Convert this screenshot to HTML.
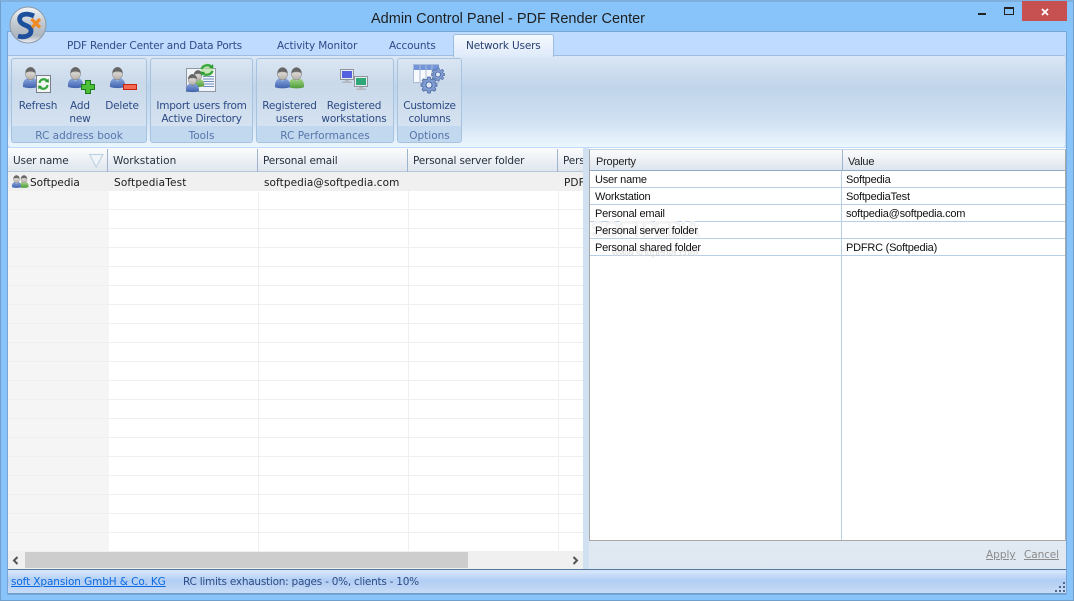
<!DOCTYPE html>
<html><head><meta charset="utf-8">
<style>
html,body{margin:0;padding:0;width:1074px;height:601px;overflow:hidden;background:#88c4fa}
*{box-sizing:border-box}
.a{position:absolute;white-space:nowrap}
.r{font-family:"DejaVu Sans",sans-serif;font-size:10.5px;color:#2c4a85;line-height:13px;text-align:center;letter-spacing:-.15px}
.t{font-family:"DejaVu Sans",sans-serif;font-size:10.5px;color:#2f4a86;line-height:14px;letter-spacing:-.15px}
.gl{font-family:"DejaVu Sans",sans-serif;font-size:10.5px;color:#5575aa;line-height:16px;text-align:center}
.h{font-family:"DejaVu Sans",sans-serif;font-size:10.5px;color:#26303f;line-height:14px;letter-spacing:-.17px}
.c{font-family:"DejaVu Sans",sans-serif;font-size:10.5px;color:#1a1a1a;line-height:14px;letter-spacing:.08px}
.p{font-family:"Liberation Sans",sans-serif;font-size:11px;letter-spacing:-.22px;color:#111;line-height:14px}
.g{position:absolute;top:58px;height:85px;border:1px solid #a6c3df;border-radius:3px;background:linear-gradient(#dbe6f3,#c9d9ea 30%,#d5e2f0 82%);overflow:hidden}
.g i{position:absolute;left:0;right:0;bottom:0;height:16px;background:#c2d8ee;display:block}
svg{position:absolute;overflow:visible}
</style></head><body>
<div class="a" style="left:0;top:0;width:1074px;height:601px;border:1px solid #6f9fca;border-top:2px solid #7fb0dd"></div>

<!-- title bar -->
<div class="a" style="left:371px;top:10px;font:14.5px/18px 'Liberation Sans',sans-serif;color:#1f1f1f">Admin Control Panel - PDF Render Center</div>
<div class="a" style="left:978px;top:13px;width:8px;height:2px;background:#222"></div>
<div class="a" style="left:1004px;top:7px;width:10px;height:8px;border:1px solid #222;border-top-width:2px"></div>
<div class="a" style="left:1022px;top:1px;width:45px;height:20px;background:#c75050"></div>
<svg style="left:1041px;top:8px" width="8" height="8"><path d="M1 1L7 7M7 1L1 7" stroke="#fff" stroke-width="1.8"/></svg>

<!-- inner window -->
<div class="a" style="left:7px;top:31px;width:1060px;height:564px;background:#bfdbff;border:1px solid #78a6d6"></div>

<!-- logo -->
<svg style="left:9px;top:6px" width="38" height="38" viewBox="0 0 38 38">
<defs><linearGradient id="lg" x1="0" y1="0" x2="0" y2="1"><stop offset="0" stop-color="#f4f6f8"/><stop offset=".45" stop-color="#c2c9d0"/><stop offset=".8" stop-color="#aeb6bf"/><stop offset="1" stop-color="#f2f4f6"/></linearGradient></defs>
<circle cx="19" cy="19" r="18" fill="url(#lg)" stroke="#8e99a6"/>
<path d="M25 10C16 6 9 9 11 15C13 20 22 19 22 25C22 30 15 32 9 30" fill="none" stroke="#1c4f9c" stroke-width="4.800"/>
<path d="M22.500 13L31 21.500M31 13L23 21.500" stroke="#f08a24" stroke-width="3.200"/>
</svg>

<!-- tabs -->
<div class="a t" style="left:67px;top:39px;letter-spacing:-.19px">PDF Render Center and Data Ports</div>
<div class="a t" style="left:277px;top:39px">Activity Monitor</div>
<div class="a t" style="left:389px;top:39px">Accounts</div>
<div class="a" style="left:453px;top:34px;width:101px;height:23px;background:linear-gradient(#f5f9fe,#dfeafa);border:1px solid #9dbde0;border-bottom:none;border-radius:3px 3px 0 0;z-index:2"></div>
<div class="a t" style="left:466px;top:39px;z-index:3;color:#27406f">Network Users</div>

<!-- ribbon -->
<div class="a" style="left:8px;top:55px;width:1058px;height:92px;background:linear-gradient(#dbe7f5,#c0d4ea 35%,#cfe0f2 70%,#ecf6fd);border-top:1px solid #9dbde0;border-right:1px solid #c6dbf0;border-radius:0 3px 3px 3px"></div>

<div class="g" style="left:11px;width:136px"><i></i></div>
<div class="g" style="left:150px;width:103px"><i></i></div>
<div class="g" style="left:256px;width:138px"><i></i></div>
<div class="g" style="left:397px;width:65px"><i></i></div>

<!-- person symbol -->
<svg width="0" height="0" style="left:0;top:0"><defs>
<linearGradient id="hd" x1="0" y1="0" x2="0" y2="1"><stop offset="0" stop-color="#9a9a9a"/><stop offset=".5" stop-color="#d6d2ce"/><stop offset="1" stop-color="#b5aea8"/></linearGradient>
<linearGradient id="bb" x1="0" y1="0" x2="0" y2="1"><stop offset="0" stop-color="#8aa8e0"/><stop offset="1" stop-color="#3f62ad"/></linearGradient>
<linearGradient id="bg2" x1="0" y1="0" x2="0" y2="1"><stop offset="0" stop-color="#a6d88a"/><stop offset="1" stop-color="#4d9a3a"/></linearGradient>
<symbol id="pb" viewBox="0 0 15 21" overflow="visible">
<path d="M0 20C-.5 14 2 12 5 11L7.500 14L10 11C13 12 15.500 14 15 20C10 21.500 5 21.500 0 20Z" fill="url(#bb)"/>
<ellipse cx="7.500" cy="6.500" rx="5" ry="6.300" fill="url(#hd)" stroke="#777" stroke-width=".5"/>
<path d="M2.500 6.500C1.500 -1.500 13.500 -1.500 12.500 6.500C11 3.800 4 3.800 2.500 6.500Z" fill="#666"/>
</symbol>
<symbol id="pg" viewBox="0 0 15 21" overflow="visible">
<path d="M0 20C-.5 14 2 12 5 11L7.500 14L10 11C13 12 15.500 14 15 20C10 21.500 5 21.500 0 20Z" fill="url(#bg2)"/>
<ellipse cx="7.500" cy="6.500" rx="5" ry="6.300" fill="url(#hd)" stroke="#777" stroke-width=".5"/>
<path d="M2.500 6.500C1.500 -1.500 13.500 -1.500 12.500 6.500C11 3.800 4 3.800 2.500 6.500Z" fill="#666"/>
</symbol>
<symbol id="gear" viewBox="0 0 24 24" overflow="visible">
<path d="M10 0H14L14.600 3.200L17.200 4.300L19.900 2.500L22.500 5.100L20.700 7.800L21.800 10.400L24 10L24 14L21.800 13.600L20.700 16.200L22.500 18.900L19.900 21.500L17.200 19.700L14.600 20.800L14 24H10L9.400 20.800L6.800 19.700L4.100 21.500L1.500 18.900L3.300 16.200L2.200 13.600L0 14L0 10L2.200 10.400L3.300 7.800L1.500 5.100L4.100 2.500L6.800 4.300L9.400 3.200Z" fill="#7f9bd0" stroke="#3d5d9a"/>
<circle cx="12" cy="12" r="4.500" fill="#dfe8f6" stroke="#3d5d9a" stroke-width="1.300"/>
</symbol>
</defs></svg>

<!-- Refresh icon -->
<svg style="left:23px;top:67px" width="15" height="21"><use href="#pb" width="15" height="21"/></svg>
<svg style="left:36px;top:75px" width="15" height="18"><rect x=".5" y=".5" width="14" height="17" fill="#f4f6f4" stroke="#77808a"/><path d="M3.500 8C4 4 9 3 11 6M11.500 10C11 14 6 15 4 12" fill="none" stroke="#34a83e" stroke-width="2.200"/><path d="M9 7L13 7.500L12.500 3.500ZM6 11L2 10.500L2.500 14.500Z" fill="#2b9a36"/></svg>

<!-- Add icon -->
<svg style="left:68px;top:67px" width="15" height="21"><use href="#pb" width="15" height="21"/></svg>
<svg style="left:81px;top:80px" width="14" height="14"><path d="M4.500.5H9.500V4.500H13.500V9.500H9.500V13.500H4.500V9.500H.5V4.500H4.500Z" fill="#4cc037" stroke="#217a1b"/></svg>

<!-- Delete icon -->
<svg style="left:110px;top:67px" width="15" height="21"><use href="#pb" width="15" height="21"/></svg>
<svg style="left:123px;top:84px" width="14" height="6"><rect x=".5" y=".5" width="13" height="5" fill="#f26a55" stroke="#c8230f"/></svg>

<!-- Import icon -->
<svg style="left:186px;top:64px" width="31" height="29">
<rect x=".5" y="4.500" width="29" height="23" fill="#f0f3f7" stroke="#8f98a3"/>
<path d="M17 12.500H28M17 15H28M17 17.500H28M17 20H28M17 22.500H28" stroke="#6f8fc0" stroke-width="1"/>
<use href="#pg" x="6" y="6" width="12" height="17"/>
<use href="#pb" x="0" y="10" width="13" height="18"/>
<circle cx="21" cy="6" r="6.500" fill="#b6e29e" opacity=".7"/>
<path d="M15.500 5C17 1 23 0 25.500 3M26.500 7C25 11 19 12 16.500 9" fill="none" stroke="#3aa83f" stroke-width="2.400"/>
<path d="M23 4L27.500 4.500L27 0ZM19 8L14.500 7.500L15 12Z" fill="#2f9a35"/>
</svg>

<!-- Registered users icon -->
<svg style="left:275px;top:67px" width="29" height="22">
<use href="#pg" x="14" y="0" width="15" height="21.500"/>
<use href="#pb" x="0" y="0" width="15" height="21.500"/>
</svg>

<!-- workstations icon -->
<svg style="left:340px;top:69px" width="29" height="21">
<rect x=".5" y=".5" width="13" height="10" fill="#e8ebee" stroke="#8f959c"/><rect x="2" y="2" width="10" height="7" fill="#5560e0"/>
<path d="M5 11H9V12.500H12V14H2V12.500H5Z" fill="#b4b9bf"/>
<rect x="14.500" y="7.500" width="13" height="10" fill="#e8ebee" stroke="#8f959c"/><rect x="16" y="9" width="10" height="7" fill="#2fa878"/>
<path d="M19 18H23V19.500H26V21H16V19.500H19Z" fill="#b4b9bf"/>
</svg>

<!-- customize icon -->
<svg style="left:413px;top:64px" width="32" height="30">
<rect x=".5" y=".5" width="25" height="18" fill="#f7f9fc" stroke="#a9bbd6"/>
<rect x="1" y="1" width="25" height="5" fill="#7396da"/>
<path d="M7 1V19M13 1V19M19 1V19" stroke="#a9bbd6"/>
<use href="#gear" x="18.500" y="4" width="13" height="13"/>
<use href="#gear" x="8" y="13" width="16" height="16"/>
</svg>

<!-- ribbon labels -->
<div class="a r" style="left:12px;top:100px;width:52px">Refresh</div>
<div class="a r" style="left:60px;top:100px;width:40px">Add<br>new</div>
<div class="a r" style="left:102px;top:100px;width:40px">Delete</div>
<div class="a r" style="left:151px;top:100px;width:101px;letter-spacing:-.24px">Import users from<br>Active Directory</div>
<div class="a r" style="left:257px;top:100px;width:65px">Registered<br>users</div>
<div class="a r" style="left:318px;top:100px;width:72px">Registered<br>workstations</div>
<div class="a r" style="left:398px;top:100px;width:63px;letter-spacing:-.3px">Customize<br>columns</div>
<div class="a gl" style="left:12px;top:128px;width:134px">RC address book</div>
<div class="a gl" style="left:151px;top:128px;width:101px">Tools</div>
<div class="a gl" style="left:257px;top:128px;width:136px">RC Performances</div>
<div class="a gl" style="left:398px;top:128px;width:63px">Options</div>

<!-- left list -->
<div class="a" style="left:8px;top:148px;width:575px;height:421px;background:#fff;overflow:hidden">
  <div class="a" style="left:0;top:1px;width:575px;height:23px;background:linear-gradient(#fafbfc,#eef2f6 45%,#dfe6ee);border-bottom:1px solid #b9c8d9"></div>
  <div class="a" style="left:99px;top:1px;width:1px;height:23px;background:#9db4cc"></div>
  <div class="a" style="left:249px;top:1px;width:1px;height:23px;background:#9db4cc"></div>
  <div class="a" style="left:399px;top:1px;width:1px;height:23px;background:#9db4cc"></div>
  <div class="a" style="left:549px;top:1px;width:1px;height:23px;background:#9db4cc"></div>
  <div class="a" style="left:0;top:24px;width:101px;height:380px;background:#f5f5f5"></div>
  <div class="a" style="left:0;top:43px;width:575px;height:361px;background:repeating-linear-gradient(180deg,transparent 0,transparent 18px,#efefef 18px,#efefef 19px)"></div>
  <div class="a" style="left:101px;top:24px;width:474px;height:380px;background:repeating-linear-gradient(90deg,transparent 0,transparent 149px,#efefef 149px,#efefef 150px)"></div>
  <div class="a" style="left:0;top:24px;width:575px;height:19px;background:#f0f0f0"></div>
  <div class="a" style="left:0;top:404px;width:575px;height:17px;background:#f0f0f0"></div>
  <div class="a" style="left:17px;top:404px;width:443px;height:16px;background:#cdcdcd"></div>
</div>
<svg style="left:89px;top:154px" width="15" height="14"><path d="M.5 .5H14L7.200 13Z" fill="#eef4f8" stroke="#b9d0de"/></svg>
<div class="a h" style="left:13px;top:154px">User name</div>
<div class="a h" style="left:113px;top:154px;letter-spacing:.05px">Workstation</div>
<div class="a h" style="left:263px;top:154px">Personal email</div>
<div class="a h" style="left:413px;top:154px">Personal server folder</div>
<div class="a h" style="left:563px;top:154px;width:20px;overflow:hidden">Pers</div>
<svg style="left:12px;top:175px" width="17" height="13">
<use href="#pg" x="7.500" y="0" width="9" height="13"/>
<use href="#pb" x="0" y="0" width="9" height="13"/>
</svg>
<div class="a c" style="left:30px;top:176px;letter-spacing:0">Softpedia</div>
<div class="a c" style="left:114px;top:176px;letter-spacing:.15px">SoftpediaTest</div>
<div class="a c" style="left:264px;top:176px">softpedia@softpedia.com</div>
<div class="a c" style="left:564px;top:176px;width:19px;overflow:hidden">PDFRC</div>
<svg style="left:12px;top:556px" width="8" height="9"><path d="M5.500 1L2 4.500L5.500 8" fill="none" stroke="#555" stroke-width="2"/></svg>
<svg style="left:571px;top:556px" width="8" height="9"><path d="M2.500 1L6 4.500L2.500 8" fill="none" stroke="#555" stroke-width="2"/></svg>

<!-- splitter -->
<div class="a" style="left:583px;top:148px;width:6px;height:421px;background:#d2e1f1"></div>

<!-- right panel -->
<div class="a" style="left:589px;top:148px;width:477px;height:421px;background:linear-gradient(#fff,#dfe8f2)"></div>
<div class="a" style="left:589px;top:149px;width:477px;height:392px;background:#fff;border:1px solid #a8a8a8;border-top-color:#c5d3e3;overflow:hidden">
  <div class="a" style="left:0;top:0;width:477px;height:21px;background:linear-gradient(#fafbfc,#eef2f6 45%,#dde5ee);border-bottom:1px solid #8fa9c6"></div>
  <div class="a" style="left:252px;top:0;width:1px;height:21px;background:#9db4cc"></div>
  <div class="a" style="left:251px;top:21px;width:1px;height:371px;background:#b8cde6"></div>
  <div class="a" style="left:0;top:37px;width:477px;height:1px;background:#b8cde6"></div>
  <div class="a" style="left:0;top:54px;width:477px;height:1px;background:#b8cde6"></div>
  <div class="a" style="left:0;top:71px;width:477px;height:1px;background:#b8cde6"></div>
  <div class="a" style="left:0;top:88px;width:477px;height:1px;background:#b8cde6"></div>
  <div class="a" style="left:0;top:105px;width:477px;height:1px;background:#b8cde6"></div>
</div>
<div class="a" style="left:590px;top:217px;font:bold 23px/24px 'Liberation Sans',sans-serif;color:#f2f2f2;letter-spacing:-2.600px">SOFTPEDIA</div>
<div class="a" style="left:612px;top:247px;font:10px/14px 'Liberation Sans',sans-serif;color:#dadada">www.softpedia.com</div>
<div class="a p" style="left:596px;top:155px;color:#222">Property</div>
<div class="a p" style="left:848px;top:155px;color:#222">Value</div>
<div class="a p" style="left:595px;top:173px">User name</div>
<div class="a p" style="left:846px;top:173px">Softpedia</div>
<div class="a p" style="left:595px;top:190px">Workstation</div>
<div class="a p" style="left:846px;top:190px">SoftpediaTest</div>
<div class="a p" style="left:595px;top:207px">Personal email</div>
<div class="a p" style="left:846px;top:207px">softpedia@softpedia.com</div>
<div class="a p" style="left:595px;top:224px">Personal server folder</div>
<div class="a p" style="left:595px;top:241px">Personal shared folder</div>
<div class="a p" style="left:846px;top:241px">PDFRC (Softpedia)</div>
<div class="a" style="left:986px;top:548px;font:10.5px/14px 'DejaVu Sans',sans-serif;color:#8a8a8a;text-decoration:underline">Apply</div>
<div class="a" style="left:1024px;top:548px;font:10.5px/14px 'DejaVu Sans',sans-serif;color:#8a8a8a;text-decoration:underline;letter-spacing:-.1px">Cancel</div>

<!-- status bar -->
<div class="a" style="left:8px;top:569px;width:1058px;height:25px;background:linear-gradient(#d4e4fb,#d4e4fb 2px,#b1cdf3 45%,#c8dcf6);border-top:1px solid #55789f;border-bottom:1px solid #6f9fcf"></div>
<div class="a" style="left:11px;top:575px;font:10.5px/14px 'DejaVu Sans',sans-serif;color:#0a6ae0;text-decoration:underline;letter-spacing:-.11px">soft Xpansion GmbH &amp; Co. KG</div>
<div class="a" style="left:183px;top:575px;font:10.5px/14px 'DejaVu Sans',sans-serif;color:#2c4a85;letter-spacing:-.25px">RC limits exhaustion: pages - 0%, clients - 10%</div>
<svg style="left:1055px;top:581px" width="11" height="11"><path d="M8 1h2v2H8zM4 5h2v2H4zM8 5h2v2H8zM0 9h2v2H0zM4 9h2v2H4zM8 9h2v2H8z" fill="#50688a"/></svg>
</body></html>
